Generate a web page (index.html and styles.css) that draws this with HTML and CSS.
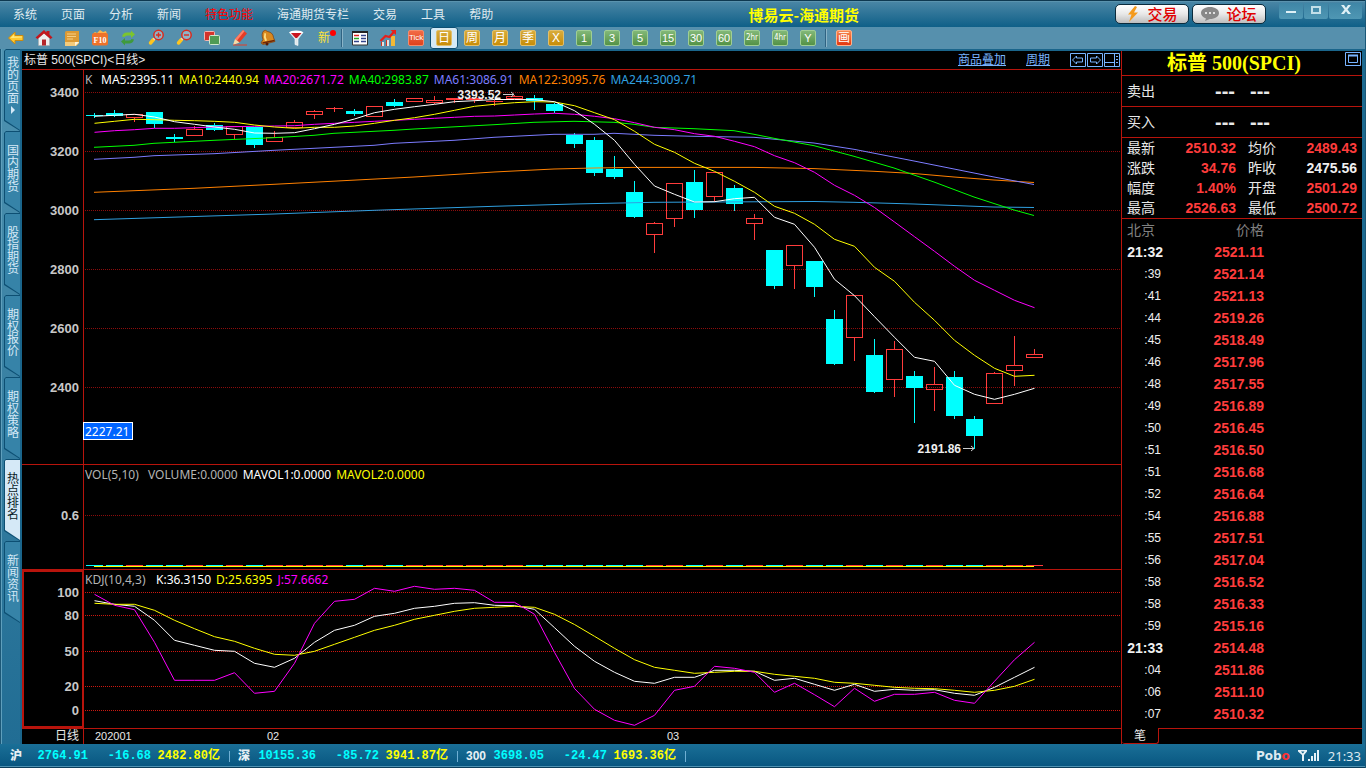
FILE: index.html
```html
<!DOCTYPE html>
<html lang="zh-CN">
<head>
<meta charset="utf-8">
<title>博易云-海通期货</title>
<link rel="stylesheet" href="styles.css">
</head>
<body>
<div class="app">
  <header class="titlebar">
    <nav class="menu">
      <a href="#">系统</a><a href="#">页面</a><a href="#">分析</a><a href="#">新闻</a><a href="#" class="hot">特色功能</a><a href="#">海通期货专栏</a><a href="#">交易</a><a href="#">工具</a><a href="#">帮助</a>
    </nav>
    <h1 class="brand">博易云-海通期货</h1>
    <div class="actions">
      <button class="pill"><svg width="14" height="16" viewBox="0 0 14 16"><path d="M9 0 2 8.500h3.500L3 16l9-9.500H8L11 1z" fill="#f49a1c"/></svg>交易</button>
      <button class="pill"><svg width="18" height="14" viewBox="0 0 18 14"><path d="M9 0c5 0 9 2.500 9 6s-4 6-9 6l-5 2 1-2.500C2 10.500 0 8.500 0 6c0-3.500 4-6 9-6z" fill="#888"/><circle cx="5" cy="6" r="1" fill="#fff"/><circle cx="9" cy="6" r="1" fill="#fff"/><circle cx="13" cy="6" r="1" fill="#fff"/></svg>论坛</button>
    </div>
    <div class="winctl">
      <button aria-label="最小化"><svg width="12" height="12" viewBox="0 0 12 12"><path d="M1 6h10v2H1z" fill="#dff0f6"/></svg></button>
      <button aria-label="最大化"><svg width="12" height="12" viewBox="0 0 12 12"><path d="M2 2h8v6H2z" fill="none" stroke="#c2dfe9" stroke-width="2"/></svg></button>
      <button aria-label="关闭" class="close"><svg width="12" height="12" viewBox="0 0 12 12"><path d="M1 0h3l2 3 2-3h3L7.500 4.500 11 9H8L6 6.300 4 9H1l3.500-4.500z" fill="#dff0f6"/></svg></button>
    </div>
  </header>

  <div class="toolbar">
    <button aria-label="后退"><svg viewBox="0 0 18 18"><path d="M1.500 9 8 3v3.500h8v5H8V15z" fill="#ffc82e" stroke="#c98a10"/><path d="M3.500 9 7 5.500v2h8v1z" fill="#ffea80"/></svg></button>
    <button aria-label="首页"><svg viewBox="0 0 18 18"><path d="M3.500 9v7.500h11V9L9 4z" fill="#eee" stroke="#aaa" stroke-width=".5"/><path d="M9 1 0.500 8.500 2.500 10 9 4.500l6.500 5.500 2-1.500-3-3V2h-3v1.500z" fill="#c4161c"/><path d="M7 10.500h4v6H7z" fill="#b3262b"/></svg></button>
    <button aria-label="便笺"><svg viewBox="0 0 18 18"><path d="M2 3.500Q2 2 3.500 2H16v12l-3 3H2z" fill="#dc9a34"/><path d="M2 13h14v1l-3 3H2z" fill="#f4cb7b"/><path d="M4 5h9M4 7.500h9M4 10h6" stroke="#f6cf85"/><path d="M12 17v-4h4z" fill="#fff3d8"/></svg></button>
    <button aria-label="F10"><svg viewBox="0 0 18 18"><path d="M2 4.500 4 3l2 1 3-3 3 2 3-1 1 3z" fill="#ffb347"/><rect x="1" y="4" width="16" height="12.500" rx="2" fill="#ef7229"/><text x="9" y="14" class="ico-f">F10</text></svg></button>
    <button aria-label="刷新"><svg viewBox="0 0 18 18"><path d="M3 7.500q1-4 5-4h4V1.500l4 4-4 3.500V6.500H8.500q-2.500 0-3 1.500z" fill="#7cc52e"/><path d="M15 10.500q-1 4-5 4H6v2l-4-4L6 9v2.500h3.500q2.500 0 3-1.500z" fill="#3f9a3c"/></svg></button>
    <button aria-label="放大"><svg viewBox="0 0 18 18"><path d="M6.500 10.500 3.500 14" stroke="#ffc51e" stroke-width="3.500" stroke-linecap="round"/><path d="m8 9-1.500 1.500" stroke="#ddd" stroke-width="2"/><circle cx="11.500" cy="6" r="4.700" fill="#8fb4c6" stroke="#dc2a1c" stroke-width="1.500"/><path d="M9 6h5M11.500 3.500v5" stroke="#dc2a1c" stroke-width="1.400"/></svg></button>
    <button aria-label="缩小"><svg viewBox="0 0 18 18"><path d="M6.500 10.500 3.500 14" stroke="#ffc51e" stroke-width="3.500" stroke-linecap="round"/><path d="m8 9-1.500 1.500" stroke="#ddd" stroke-width="2"/><circle cx="11.500" cy="6" r="4.700" fill="#8fb4c6" stroke="#dc2a1c" stroke-width="1.500"/><path d="M9 6h5" stroke="#dc2a1c" stroke-width="1.400"/></svg></button>
    <button aria-label="叠加"><svg viewBox="0 0 18 18"><rect x="1.500" y="2.500" width="10" height="9" rx="1" fill="#d5342c" stroke="#f4b5b1"/><rect x="6.500" y="6.500" width="10" height="9" rx="1" fill="#4f9b54" stroke="#cfe8cd"/></svg></button>
    <button aria-label="画线"><svg viewBox="0 0 18 18"><path d="m12 1 4 3.500-7.500 9L4 10z" fill="#e43c26"/><path d="m12 1 1.500 1.200L6 11.500 4 10z" fill="#ff8066"/><path d="m4 10 4.500 3.500L2 16z" fill="#f8d9a6"/><path d="M2 16h14" stroke="#e43c26"/></svg></button>
    <button aria-label="预警"><svg viewBox="0 0 18 18"><path d="M4.500 2q2-1.500 4 .5 5.500 1 6 6l1.500 4L4 15.500 2 14l2-3.500Q2 5 4.500 2z" fill="#d9891f" stroke="#7d3b0b" stroke-width=".7"/><path d="M5.500 4q-1.500 4 .5 8l2-.5q-2-3-1-7z" fill="#ffdf84"/><path d="m3.500 14 12-2.500" stroke="#6d2507" stroke-width="1.500"/><circle cx="8" cy="15" r="1.500" fill="#581b05"/></svg></button>
    <button aria-label="筛选"><svg viewBox="0 0 18 18"><path d="M2.500 3.500 8 10v5.500l3 1V10l5-6.500z" fill="#dfe7ea" stroke="#fff" stroke-width=".6"/><ellipse cx="9.200" cy="3.500" rx="6.700" ry="2" fill="#fff"/><path d="M4 4h10.500L10 9H8.500z" fill="#c9151e"/></svg></button>
    <button aria-label="新" class="new">新<i></i></button>
    <span class="sep"></span>
    <button aria-label="报价表"><svg viewBox="0 0 18 18"><path d="M1.500 2.500h15v13.500h-15z" fill="#fff" stroke="#333"/><path d="M1 3h16" stroke="#222" stroke-width="2"/><path d="M3 6.500h5" stroke="#d22" stroke-width="1.500"/><path d="M3 9.500h5" stroke="#2a2" stroke-width="1.500"/><path d="M3 12.500h5M10 12.500h5M10 9.500h5M10 6.500h5" stroke="#34458c" stroke-width="1.500"/></svg></button>
    <button aria-label="走势"><svg viewBox="0 0 18 18"><path d="M2 13h3v4H2zM7 11h3v6H7z" fill="#e9e0dd"/><path d="M12 7h4v10h-4z" fill="#f3b936"/><path d="M2 13h1v4H2zM7 11h1v6H7z" fill="#c32"/><path d="m1.500 12 5-5 4 1L16 1.500" fill="none" stroke="#e6201c" stroke-width="2.300"/><path d="M11.500 1H17v5z" fill="#e6201c"/></svg></button>
    <button><span class="chip tick">Tick</span></button>
    <button class="on"><span class="chip gold">日</span></button>
    <button><span class="chip gold">周</span></button>
    <button><span class="chip gold">月</span></button>
    <button><span class="chip gold">季</span></button>
    <button><span class="chip gold">X</span></button>
    <button><span class="chip green">1</span></button>
    <button><span class="chip green">3</span></button>
    <button><span class="chip green">5</span></button>
    <button><span class="chip green">15</span></button>
    <button><span class="chip green">30</span></button>
    <button><span class="chip green">60</span></button>
    <button><span class="chip green small">2hr</span></button>
    <button><span class="chip green small">4hr</span></button>
    <button><span class="chip green">Y</span></button>
    <span class="sep"></span>
    <button><span class="chip red">画</span></button>
  </div>

  <main class="main">
    <aside class="rail">
      <button class="tab"><span>我的页面<svg width="6" height="12" viewBox="0 0 6 12"><path d="M1 2v8l4-4z" fill="#d5e9f7"/></svg></span></button>
      <button class="tab"><span>国内期货</span></button>
      <button class="tab"><span>股指期货</span></button>
      <button class="tab"><span>期权报价</span></button>
      <button class="tab"><span>期权策略</span></button>
      <button class="tab active"><span>热点排名</span></button>
      <button class="tab"><span>新闻资讯</span></button>
    </aside>

    <section class="chart">
      <div class="chart-head">
        <span>标普 500(SPCI)&lt;日线&gt;</span>
        <div class="links">
          <a href="#">商品叠加</a><a href="#">周期</a>
          <span class="nav">
            <button aria-label="左移"><svg width="16" height="14" viewBox="0 0 16 14"><path d="M.5.500h15v13H.5zM2.500 7l4-4v2h6v4h-6v2z"/></svg></button>
            <button aria-label="右移"><svg width="16" height="14" viewBox="0 0 16 14"><path d="M.5.500h15v13H.5zM13.500 7l-4-4v2h-6v4h6v2z"/></svg></button>
            <button aria-label="布局"><svg width="16" height="14" viewBox="0 0 16 14"><path d="M.5.500h15v13H.5zM10.500.500v13M.5 9.500h10M12 3.500h2M12 6.500h2M12 9.500h2"/></svg></button>
          </span>
        </div>
      </div>
      <div class="pane price">
        <svg id="price" viewBox="22 70 1099 394" preserveAspectRatio="xMinYMin meet"></svg>
        <p class="legend"><span class="k">K</span><span class="w">MA5:2395.11</span><span class="y">MA10:2440.94</span><span class="m">MA20:2671.72</span><span class="g">MA40:2983.87</span><span class="v">MA61:3086.91</span><span class="o">MA122:3095.76</span><span class="b">MA244:3009.71</span></p>
      </div>
      <div class="pane vol">
        <svg id="vol" viewBox="22 465 1099 104" preserveAspectRatio="xMinYMin meet"></svg>
        <p class="legend"><span class="name">VOL(5,10)</span><span>VOLUME:0.0000</span><span class="w">MAVOL1:0.0000</span><span class="y">MAVOL2:0.0000</span></p>
      </div>
      <div class="pane kdj">
        <svg id="kdj" viewBox="22 570 1099 158" preserveAspectRatio="xMinYMin meet"></svg>
        <p class="legend"><span class="name">KDJ(10,4,3)</span><span class="w">K:36.3150</span><span class="y">D:25.6395</span><span class="m">J:57.6662</span></p>
      </div>
      <div class="dates">
        <svg id="dates" viewBox="22 729 1099 15" preserveAspectRatio="xMinYMin meet"></svg>
      </div>
    </section>

    <aside class="quote">
      <div class="q-title"><h2>标普 500(SPCI)</h2><button aria-label="最大化"><svg width="16" height="14" viewBox="0 0 16 14"><path d="M.5.500h15v13H.5z"/><path d="M3.500 3.500h9v7h-9z"/><path d="M3 3.500h10" stroke-width="2"/></svg></button></div>
      <div class="ask"><span>卖出</span><b>---</b><b>---</b></div>
      <div class="ask"><span>买入</span><b>---</b><b>---</b></div>
      <dl class="stats">
        <dt>最新</dt><dd>2510.32</dd><dt>均价</dt><dd>2489.43</dd>
        <dt>涨跌</dt><dd>34.76</dd><dt>昨收</dt><dd class="flat">2475.56</dd>
        <dt>幅度</dt><dd>1.40%</dd><dt>开盘</dt><dd>2501.29</dd>
        <dt>最高</dt><dd>2526.63</dd><dt>最低</dt><dd>2500.72</dd>
      </dl>
      <table class="ticks">
        <thead><tr><th>北京</th><th>价格</th></tr></thead>
        <tbody>
          <tr class="full"><td>21:32</td><td>2521.11</td></tr>
          <tr><td>:39</td><td>2521.14</td></tr>
          <tr><td>:41</td><td>2521.13</td></tr>
          <tr><td>:44</td><td>2519.26</td></tr>
          <tr><td>:45</td><td>2518.49</td></tr>
          <tr><td>:46</td><td>2517.96</td></tr>
          <tr><td>:48</td><td>2517.55</td></tr>
          <tr><td>:49</td><td>2516.89</td></tr>
          <tr><td>:50</td><td>2516.45</td></tr>
          <tr><td>:51</td><td>2516.50</td></tr>
          <tr><td>:51</td><td>2516.68</td></tr>
          <tr><td>:52</td><td>2516.64</td></tr>
          <tr><td>:54</td><td>2516.88</td></tr>
          <tr><td>:55</td><td>2517.51</td></tr>
          <tr><td>:56</td><td>2517.04</td></tr>
          <tr><td>:58</td><td>2516.52</td></tr>
          <tr><td>:58</td><td>2516.33</td></tr>
          <tr><td>:59</td><td>2515.16</td></tr>
          <tr class="full"><td>21:33</td><td>2514.48</td></tr>
          <tr><td>:04</td><td>2511.86</td></tr>
          <tr><td>:06</td><td>2511.10</td></tr>
          <tr><td>:07</td><td>2510.32</td></tr>
        </tbody>
      </table>
      <div class="q-tabs"><button>笔</button><span></span></div>
    </aside>
  </main>

  <footer class="status">
    <div class="idx"><b>沪</b><span>2764.91</span><span>-16.68</span><em>2482.80亿</em></div>
    <div class="idx"><b>深</b><span>10155.36</span><span>-85.72</span><em>3941.87亿</em></div>
    <div class="idx"><b>300</b><span>3698.05</span><span>-24.47</span><em>1693.36亿</em></div>
    <div class="right">
      <strong>Pob<i>o</i></strong>
      <svg width="22" height="14" viewBox="0 0 22 14"><path d="M0 1h9v1.500L6 6v6H4V6L0 2.500zM10 10h2v2h-2zM13 7h2v5h-2zM16 4h2v8h-2zM19 1h2v11h-2z" fill="#e6f1f6"/><path d="M3 2.500h3.500L4.800 4.500z" fill="#11628b"/></svg>
      <time>21:33</time>
    </div>
  </footer>
</div>
<script src="chart.js"></script>
</body>
</html>
```
FILE: styles.css
```css
* { box-sizing: border-box; }
body { margin: 0; background: #000; font: 12px/14px "Liberation Sans", "Noto Sans CJK SC", sans-serif; color: #e8e8e8; }
button { margin: 0; padding: 0; border: 0; background: none; color: inherit; font: inherit; display: flex; align-items: center; justify-content: center; }
a { color: inherit; text-decoration: none; }
h1, h2, p, dl, dd { margin: 0; }
svg { display: block; flex: none; }

.app { height: 100vh; display: flex; flex-direction: column; background: #1d6a90; border-right: 1px solid #1b5878; }

/* title bar */
.titlebar { flex: none; height: 27px; display: flex; align-items: center; background: linear-gradient(#4b87a6, #0f6088); border-top: 1px solid #0e3850; box-shadow: inset 0 1px #5a93ae; padding-top: 2px; }
.menu { display: flex; gap: 24px; padding-left: 13px; color: #dfeaf0; flex: 1; min-width: 0; white-space: nowrap; }
.menu .hot { color: #f00; }
.brand { font: bold 15px/20px "Noto Sans CJK SC", sans-serif; color: #ff0; flex: none; }
.actions { display: flex; flex: none; width: 420px; justify-content: flex-end; align-self: flex-start; margin-top: 1px; gap: 3px; padding-right: 13px; }
.pill { width: 74px; height: 20px; gap: 7px; border: 1px solid #0b2b3c; border-radius: 5px; background: linear-gradient(#fff, #e8e8e8 50%, #bdbdbd); color: #e00000; font: 500 15px/18px "Noto Sans CJK SC", sans-serif; }
.winctl { display: flex; gap: 1px; align-self: flex-start; margin-right: 3px; flex: none; }
.winctl button { width: 24px; height: 16px; background: linear-gradient(#3f86a6, #4f97b4); border-radius: 0 0 2px 2px; }
.winctl .close { width: 33px; }

/* toolbar */
.toolbar { flex: none; height: 24px; display: flex; align-items: center; padding-left: 2px; background: #5690ad; border-bottom: 2px solid #1a658b; }
.toolbar button { width: 28px; height: 22px; flex: none; }
.toolbar svg { width: 18px; height: 18px; }
.toolbar .on { background: #d5eaf6; border: 1px solid #0d4f73; border-radius: 3px; }
.toolbar .sep { width: 8px; height: 18px; flex: none; background: linear-gradient(90deg, transparent 3px, #2f6382 3px 4px, #8ab4c8 4px 5px, transparent 5px); }
.new { color: #ffe438; position: relative; }
.new i { position: absolute; right: 2px; top: 3px; width: 6px; height: 6px; border-radius: 3px; background: #f00; }
.chip { width: 16px; height: 16px; border-radius: 2px; color: #fff; font: 12px/14px "Liberation Sans", "Noto Sans CJK SC", sans-serif; text-align: center; border: 1px solid; }
.gold { background: linear-gradient(#d8ac3c, #c88d08); border-color: #e0bf6c; }
.green { background: linear-gradient(#82b878, #549247); border-color: #9fce95; font-size: 11px; }
.small { font-family: "DejaVu Sans Condensed", sans-serif; font-size: 8px; }
.red { background: linear-gradient(#f7884e, #e4380e); border-color: #ffb28c; }
.tick { background: linear-gradient(#f26b46, #e0421d); border-color: #f38c6c; font-size: 8px; }
.ico-f { font: bold 8px "Liberation Serif", serif; fill: #fff; text-anchor: middle; }

/* workspace */
.main { flex: 1; min-height: 0; display: flex; padding-right: 3px; }
.rail { width: 22px; flex: none; margin-top: -2px; padding-left: 4px; background: linear-gradient(90deg, #1c5877 1px, #5f9fbc 1px 2px, transparent 2px), linear-gradient(#4f93b1, #216d94); border-right: 2px solid #1a658b; }
.tab { width: 16px; height: 82px; background: #0d4f73; clip-path: polygon(2px 0, 100% 0, 100% 100%, 0 72px, 0 2px); padding: 1px 0 1px 1px; }
.tab span { width: 15px; height: 80px; padding: 0 1px 8px 2px; display: flex; flex-wrap: wrap; align-content: center; justify-content: center; background: #3683a8; clip-path: polygon(1px 0, 100% 0, 100% 100%, 0 70px, 0 1px); color: #d5e9f7; font: 12px/12px "Noto Sans CJK SC", sans-serif; word-break: break-all; }
.active span { background: #d5e9f7; color: #0b1d28; }

.chart { flex: 1; min-width: 0; display: flex; flex-direction: column; background: #000; }
.chart-head { height: 19px; flex: none; display: flex; justify-content: space-between; align-items: center; padding: 0 1px 0 2px; border-bottom: 1px solid #b8140c; }
.links { display: flex; align-items: center; gap: 20px; color: #78b4ff; }
.links a { text-decoration: underline; }
.nav { display: flex; gap: 1px; }
.nav svg, .q-title svg { fill: none; stroke: #78b4ff; }
.pane { position: relative; min-height: 0; border-bottom: 1px solid #b8140c; }
.pane svg, .dates svg { width: 100%; height: 100%; }
.price { flex: 395 395 395px; }
.vol { flex: 105 105 105px; }
.kdj { flex: 159 159 159px; }
.dates { flex: none; height: 15px; }
.dates svg { overflow: visible; }
.legend { position: absolute; left: 63px; top: 2px; display: flex; gap: 5px; font: 12px/16px "Noto Sans", sans-serif; color: #b4b4b4; white-space: nowrap; }
.legend .k { width: 11px; }
.vol .name { min-width: 58px; }
.kdj .name { min-width: 66px; }
.w { color: #fff; } .y { color: #ff0; } .m { color: #f0f; } .g { color: #0f0; }
.v { color: #7c7cff; } .o { color: #ff8000; } .b { color: #30a0e0; }

/* chart parts */
.grid { stroke: #8c0c0c; stroke-dasharray: 1 1; shape-rendering: crispEdges; }
.kdj .grid { stroke: #cc1810; }
.frame { stroke: #b8140c; fill: none; shape-rendering: crispEdges; }
.up { stroke: #ff3c3c; fill: none; shape-rendering: crispEdges; }
.down { stroke: #0ff; fill: #0ff; shape-rendering: crispEdges; }
.line { fill: none; stroke-width: 1; }
.axis { font: bold 13px "Liberation Sans", sans-serif; fill: #c8c8c8; text-anchor: end; }
.mark { font: bold 12px "Liberation Sans", sans-serif; fill: #eee; text-anchor: end; }
.arrow { stroke: #ccc; fill: none; }
.cursor { fill: #0064ff; stroke: #fff; }
.cursor-text { font: 12px "Noto Sans", sans-serif; fill: #fff; }
.date { font: 11px "Liberation Sans", "Noto Sans CJK SC", sans-serif; fill: #e8e8e8; }
.period { font: 12px "Noto Sans CJK SC", sans-serif; fill: #e8e8e8; text-anchor: end; }

/* quote panel */
.quote { width: 241px; flex: none; background: #000; border-left: 1px solid #b8140c; display: flex; flex-direction: column; font-size: 14px; line-height: 20px; }
.q-title { height: 25px; display: flex; align-items: flex-start; padding: 1px 1px 0 45px; justify-content: space-between; border-bottom: 1px solid #b8140c; }
.q-title h2 { font: bold 20px/22px "Liberation Serif", "Noto Sans CJK SC", serif; color: #ff0; }
.ask { height: 31px; display: grid; grid-template-columns: 88px 35px 35px; align-items: center; padding-left: 5px; border-bottom: 1px solid #b8140c; }
.ask b { font-size: 20px; }
.stats { display: grid; grid-template-columns: 40px 69px 40px 1fr; padding: 0 5px 0 5px; border-bottom: 1px solid #b8140c; height: 81px; }
.stats dt { height: 20px; }
.stats dt:nth-of-type(even) { padding-left: 12px; margin-right: -12px; }
.stats dd { text-align: right; font-weight: bold; color: #ff3c3c; }
.stats .flat { color: #f0f0f0; }
.ticks { border-collapse: collapse; width: 142px; table-layout: fixed; line-height: 22px; }
.ticks th { font-weight: normal; color: #808080; padding: 0; text-align: right; height: 22px; }
.ticks th:first-child { width: 42px; text-align: left; padding-left: 5px; }
.ticks td { padding: 0; height: 22px; text-align: right; font-weight: bold; color: #ff3c3c; }
.ticks td:first-child { font-size: 12px; font-weight: normal; color: #f0f0f0; padding-right: 3px; }
.ticks .full td:first-child { font-size: 14px; font-weight: bold; padding-right: 1px; }
.q-tabs { margin-top: auto; height: 16px; display: flex; }
.q-tabs button { width: 37px; border: 1px solid #b8140c; border-width: 0 1px 1px 0; border-radius: 0 0 3px 3px; font-size: 12px; line-height: 14px; }
.q-tabs span { flex: 1; border-top: 1px solid #b8140c; }

/* status bar */
.status { flex: none; height: 24px; display: flex; align-items: center; padding-left: 10px; background: linear-gradient(#1a6f97, #085680); border-bottom: 1px solid #0b3d5a; box-shadow: inset 0 -1px #4f92b2; }
.idx { width: 228px; display: grid; grid-template-columns: 20px 58px 63px 69px; font: bold 12px/16px "Liberation Mono", "Noto Sans CJK SC", monospace; color: #0ff; text-align: right; background: linear-gradient(#6fb0d4, #6fb0d4) 219px 3px / 1px 11px no-repeat; }
.idx b { text-align: left; color: #e8f0f4; white-space: nowrap; font-family: "Liberation Sans", "Noto Sans CJK SC", sans-serif; }
.idx em { font-style: normal; color: #ff0; }
.right { margin-left: auto; display: flex; align-items: center; gap: 8px; padding-right: 4px; font: 13px/16px "Noto Sans", sans-serif; color: #dfeaf0; }
.right i { font-style: normal; color: #f33; }
.right strong { font-family: "DejaVu Sans", sans-serif; font-size: 12px; }
```
FILE: chart.js
```js
const NS = 'http://www.w3.org/2000/svg';
const X0 = 94, STEP = 20;

function add(svg, tag, attrs, text) {
  const el = document.createElementNS(NS, tag);
  for (const k in attrs) el.setAttribute(k, attrs[k]);
  if (text) el.textContent = text;
  svg.appendChild(el);
}
const byId = id => document.getElementById(id);

function axis(svg, rows) {
  for (const [y, label] of rows) {
    add(svg, 'line', { class: 'grid', x1: 85, x2: 1121, y1: y + 0.5, y2: y + 0.5 });
    add(svg, 'text', { class: 'axis', x: 79, y: y + 5 }, label);
  }
}
function frame(svg, top, bottom) {
  add(svg, 'line', { class: 'frame', x1: 83.5, x2: 83.5, y1: top, y2: bottom });
}
// points: one y per bar, or [x, y] pairs
function line(svg, color, points) {
  const pts = points.map((p, i) => Array.isArray(p) ? p.join() : (X0 + 0.5 + i * STEP) + ',' + p);
  add(svg, 'polyline', { class: 'line', stroke: color, points: pts.join(' ') });
}

// [direction, body top, body bottom, wick top, wick bottom]
const bars = [
  ['d',115,116,113,118],['d',113,116,110,117],['u',114,118,114,122],['d',112,124,112,128],
  ['d',137,139,134,142],['u',129,136,126,136],['d',125,130,123,131],['u',126,135,126,139],
  ['d',127,145,127,148],['u',137,142,131,142],['u',122,128,120,128],['u',111,115,110,119],
  ['u',108,109,107,112],['d',111,114,109,116],['u',106,117,106,117],['d',102,106,99,107],
  ['u',98,102,98,102],['u',100,103,96,104],['u',98,100,98,103],['u',98,100,98,103],
  ['u',101,102,100,106],['u',96,99,95,99],['d',98,101,95,110],['d',104,111,103,113],
  ['d',135,144,133,148],['d',140,173,137,176],['d',169,177,156,179],['d',192,217,181,218],
  ['u',223,235,222,253],['u',183,219,183,227],['d',182,210,170,218],['u',172,197,172,202],
  ['d',188,204,185,211],['u',218,224,214,240],['d',250,286,250,289],['u',245,266,245,289],
  ['d',261,287,261,297],['d',319,364,310,365],['u',295,338,295,361],['d',355,392,339,393],
  ['u',349,380,341,397],['d',376,388,371,423],['u',384,390,367,411],['d',377,416,371,419],
  ['d',419,436,416,449],['u',373,404,372,404],['u',365,371,336,386],['u',354,358,349,358]
];

const price = byId('price');
frame(price, 70, 464);
axis(price, [[92,'3400'],[151,'3200'],[210,'3000'],[269,'2800'],[328,'2600'],[387,'2400']]);
bars.forEach(([dir, t, b, wt, wb], i) => {
  const x = X0 + i * STEP;
  const flat = b - t <= 1;
  const box = flat ? `M${x - 8} ${t + 0.5}h17` : `M${x - 7.5} ${t + 0.5}h16V${b - 0.5}h-16z`;
  add(price, 'path', {
    class: dir === 'u' ? 'up' : 'down',
    d: `${box}M${x + 0.5} ${wt}V${t}M${x + 0.5} ${b}V${wb}`
  });
});
line(price, '#30a0e0', [[94,219.7],[274,214],[374,210.3],[494,206.3],[574,204],[654,202.3],[814,201.5],[854,202.3],[914,204],[954,205.5],[994,207],[1034,207.5]]);
line(price, '#ff8000', [[94,192.3],[194,188.3],[274,184.3],[414,177],[494,172],[554,169],[594,168],[634,167.4],[754,167.4],[814,168.6],[874,171.3],[914,173.5],[954,177],[994,180],[1034,182.5]]);
line(price, '#7c7cff', [[94,159.3],[134,157.3],[154,155.7],[214,153.7],[274,150.3],[374,145.3],[394,143.3],[454,140.3],[494,137.3],[554,134.3],[594,134.3],[614,133.3],[654,135.3],[694,136.3],[754,137.3],[814,143],[854,149.3],[914,161],[954,169],[994,177],[1034,184.5]]);
line(price, '#00ff00', [[94,147.3],[134,145.3],[154,143.3],[214,140.3],[274,137.7],[314,135.3],[334,133.3],[394,130.3],[414,129],[494,124.7],[534,122.3],[574,121.3],[614,122.3],[634,124.3],[654,127.3],[694,128.7],[734,130.7],[754,134.3],[774,138.3],[814,145.7],[854,156.3],[894,168],[914,175],[934,182],[954,189.5],[974,197],[994,203.5],[1014,210],[1034,215.5]]);
line(price, '#ff00ff', [132.3,130.7,129.7,128.3,128.3,127.7,127,126.7,126.3,126,125.7,124.3,123.3,122.3,121.3,120.3,119.3,118.3,117.3,116.3,116,115,114,113.3,114.3,116.3,118.7,122.7,127.3,129.7,133.7,136.3,141.3,146.7,155.7,162.7,172.3,185.3,195.3,207.5,222,236.7,251.3,266.3,280.3,290.3,300.3,307.7]);
line(price, '#ffff00', [123.3,121.3,119.3,119.7,120.3,120.7,121.3,122.3,125,127,128.3,127.3,127.3,126,123.3,120.3,117.7,114.3,110.3,106.3,104.3,102.7,101.7,102,105.7,112.7,119.7,131.3,144.3,152.3,163.3,171.3,181.3,192.3,206.3,213.3,224.3,239.3,246.3,267.3,281.3,302.3,320.3,340.3,355.3,368.3,376.3,375.3]);
line(price, '#ffffff', [116.3,115.3,114.3,117,121.7,124.3,127,129.3,133,133.3,132.7,128.7,124.3,119,112.7,109.3,106.7,104.3,101.7,100.7,99.5,99.5,99.7,101.7,110.7,124.3,140.3,164.3,186,194.3,202,201.7,198.7,197.3,217.3,224.3,247.3,279.3,295.7,316.7,337.3,357.3,361.3,385.3,394.3,399.3,394.3,388.3]);
add(price, 'text', { class: 'mark', x: 501, y: 99 }, '3393.52');
add(price, 'path', { class: 'arrow', d: 'M503 94.500h11M511 92l3 2.500-3 2.500' });
add(price, 'text', { class: 'mark', x: 961, y: 453 }, '2191.86');
add(price, 'path', { class: 'arrow', d: 'M963 448.500h11M971 446l3 2.500-3 2.500' });
add(price, 'rect', { class: 'cursor', x: 83.5, y: 422.5, width: 49, height: 17 });
add(price, 'text', { class: 'cursor-text', x: 85, y: 436 }, '2227.21');

const vol = byId('vol');
frame(vol, 465, 569);
axis(vol, [[515, '0.6']]);
bars.forEach(([dir], i) => {
  const x = X0 + i * STEP;
  add(vol, 'path', { class: dir === 'u' ? 'up' : 'down', d: `M${x - 8} 565.5h17` });
});
line(vol, '#ffff00', [[94, 566.5], [1034, 566.5]]);

const kdj = byId('kdj');
frame(kdj, 570, 728);
add(kdj, 'rect', { class: 'frame', x: 23, y: 571, width: 60, height: 156, 'stroke-width': 2 });
axis(kdj, [[592,'100'],[615,'80'],[651,'50'],[686,'20'],[710,'0']]);
line(kdj, '#ffffff', [600.7,604.3,606.3,620.3,640.3,645.3,650.3,651.3,663.3,667.3,658.3,642.3,630.3,625.3,616.3,613.3,608.3,606.3,603.3,602.7,605.3,605.7,609.3,627.7,646.3,661.3,672.3,681.3,683.3,677.3,677.3,670.3,670.3,671.3,680.3,678.3,684.3,690.3,684.3,691.3,689.3,690.3,689.7,693.3,695.3,687.3,677.3,667.3]);
line(kdj, '#ffff00', [603.3,604.3,604.3,610.3,620.3,628.7,636.7,641.3,648.3,654.3,655.3,651.3,644.3,637.3,630.3,625.3,619.3,615.3,611.3,608.3,607.3,606.3,607.3,614.3,624.5,636.3,648.3,659.7,667.3,670.3,673.3,672.3,671.3,671.3,674.3,676.3,678.3,682.3,683.3,685.3,687.3,688.3,688.7,690.3,692.3,690.3,686.3,679.3]);
line(kdj, '#ff00ff', [594.3,605.3,609.7,642.3,680.3,680.3,680.3,672.7,693.3,691.3,663.3,623.3,601.3,599.3,588.3,591.3,586.3,589.3,588.3,590.3,602.3,602.3,614.3,652.3,688.5,709.3,720.3,725.3,715.3,690.3,686.3,666.3,668.3,672.3,692.3,683.3,694.7,706.7,688.3,701.3,694.3,694.3,692.3,700.3,703.3,681.3,659.7,642.3]);

const dates = byId('dates');
frame(dates, 729, 744);
add(dates, 'text', { class: 'period', x: 79, y: 740 }, '日线');
add(dates, 'text', { class: 'date', x: 95, y: 740 }, '202001');
add(dates, 'text', { class: 'date', x: 267, y: 740 }, '02');
add(dates, 'text', { class: 'date', x: 667, y: 740 }, '03');
```
